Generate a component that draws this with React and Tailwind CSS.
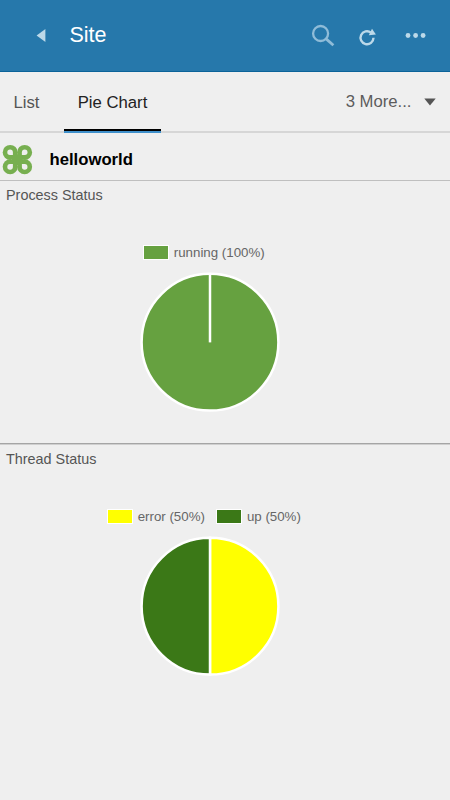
const processStatus = [{ label: "running (100%)", color: "#66a140", share: 1 }];

const threadStatus = [
  { label: "error (50%)", color: "#ffff00", share: 0.5 },
  { label: "up (50%)", color: "#3b7817", share: 0.5 },
];

function CloverIcon() {
  return (
    <svg className="mt-[5px]" width="31" height="31" viewBox="0 0 31 31">
      <g fill="#77af50">
        <circle cx="8.2" cy="8.4" r="7.5" />
        <circle cx="22.6" cy="8.4" r="7.5" />
        <circle cx="8.2" cy="22.8" r="7.5" />
        <circle cx="22.6" cy="22.8" r="7.5" />
        <path d="M10 10.2H20.8V21H10Z" />
      </g>
      <g fill="#efefef">
        <path d="M10.9 11.1H8A2.8 2.8 0 1 1 10.9 8.2Z" />
        <path d="M19.9 11.1H22.8A2.8 2.8 0 1 0 19.9 8.2Z" />
        <path d="M10.9 20.1H8A2.8 2.8 0 1 0 10.9 23Z" />
        <path d="M19.9 20.1H22.8A2.8 2.8 0 1 1 19.9 23Z" />
      </g>
    </svg>
  );
}

function Header() {
  return (
    <header className="flex h-[72px] items-start border-b border-[#0b6399] bg-[#2678ab] text-[#bcd9e9]">
      <svg className="mt-[28px] ml-[36px]" width="10" height="15" viewBox="0 0 10 15">
        <path d="M0.6 7.5L9.4 1V14Z" fill="currentColor" />
      </svg>
      <h1 className="mt-[21px] ml-[23.5px] text-[21.5px] leading-[28px] text-white">Site</h1>
      <div className="mt-[22px] mr-[24px] ml-auto flex">
        <svg width="26" height="26" viewBox="0 0 26 26" fill="none" stroke="#8fbcd8">
          <circle cx="9.6" cy="11.5" r="7.5" strokeWidth="2.3" />
          <path d="M15.1 16.9L22.4 23.2" strokeWidth="2.8" />
        </svg>
        <svg className="ml-[20px]" width="24" height="26" viewBox="0 0 24 26" fill="none">
          <path d="M14 10.6A6.5 6.5 0 1 0 16.5 15.8" stroke="currentColor" strokeWidth="2.4" />
          <path d="M15 6.8L18.9 12.6L11.8 13.2Z" fill="currentColor" />
        </svg>
        <svg className="ml-[23px]" width="22" height="26" viewBox="0 0 22 26" fill="currentColor">
          <circle cx="4" cy="13.5" r="2.4" />
          <circle cx="11.6" cy="13.5" r="2.4" />
          <circle cx="19.1" cy="13.5" r="2.4" />
        </svg>
      </div>
    </header>
  );
}

function Tabs() {
  return (
    <nav className="flex h-[61px] items-stretch border-b-2 border-[#d6d6d6] text-[16.7px] leading-[20px]">
      <button className="w-[64px] pt-[3px] pl-[13.5px] text-left text-[#555]">List</button>
      <button className="relative w-[97px] pt-[3px] text-[#222]">
        Pie Chart
        <span className="absolute inset-x-0 -bottom-[2px] h-[4px] border-t-2 border-black bg-[#3f90cb]" />
      </button>
      <button className="mr-[14px] ml-auto flex items-center pt-px text-[#5c5c5c]">
        3 More...
        <svg className="ml-[12.5px]" width="12" height="8" viewBox="0 0 12 8">
          <path d="M0.3 0.5H11.7L6 7.6Z" fill="#555" />
        </svg>
      </button>
    </nav>
  );
}

function Pie({ data }) {
  return (
    <svg className="ml-[140px] block" width="140" height="140" viewBox="0 0 140 140">
      <g stroke="#fff" strokeWidth="2.5">
        {data.length === 1 ? (
          <>
            <circle cx="70" cy="70.2" r="68.4" fill={data[0].color} />
            <path d="M70 70.4V1.8" />
          </>
        ) : (
          <>
            <path d="M70 1.8A68.4 68.4 0 0 1 70 138.6Z" fill={data[0].color} />
            <path d="M70 138.6A68.4 68.4 0 0 1 70 1.8Z" fill={data[1].color} />
          </>
        )}
      </g>
    </svg>
  );
}

function ChartPanel({ title, data }) {
  return (
    <section className="h-[264px]">
      <h2 className="h-[62px] pt-[4px] pl-[6px] text-[14.4px] leading-[20px] text-[#555]">{title}</h2>
      <ul className="mb-[11px] flex h-[18px] w-[407.5px] items-center justify-center gap-[11px] text-[13.3px] leading-[18px] text-[#666]">
        {data.map((item) => (
          <li key={item.label} className="flex items-center">
            <span
              className="mr-[5px] h-[15px] w-[26px] border border-white"
              style={{ backgroundColor: item.color }}
            />
            <span className="pt-[2px]">{item.label}</span>
          </li>
        ))}
      </ul>
      <Pie data={data} />
    </section>
  );
}

export default function App() {
  return (
    <div className="h-[800px] w-[450px] overflow-hidden bg-[#efefef] font-['Liberation_Sans',Arial,sans-serif]">
      <Header />
      <Tabs />
      <div className="flex h-[48px] items-center border-b border-[#bfbfbf] pl-[2px]">
        <CloverIcon />
        <span className="mt-[6px] ml-[16.5px] text-[16.7px] leading-[20px] font-bold text-black">helloworld</span>
      </div>
      <ChartPanel title="Process Status" data={processStatus} />
      <div className="-mt-[2px] h-[2px] border-t border-[#a5a5a5] bg-[#cfcfcf]" />
      <ChartPanel title="Thread Status" data={threadStatus} />
    </div>
  );
}
